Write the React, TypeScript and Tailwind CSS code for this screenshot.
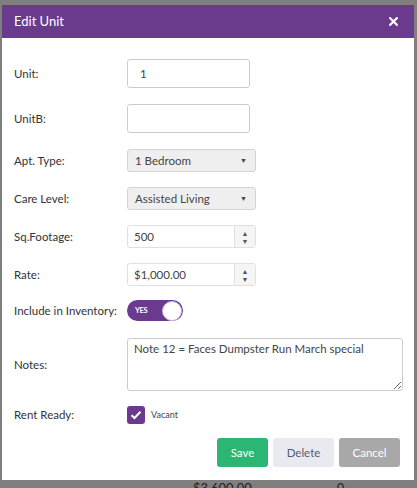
import React from 'react';

const FONT = { fontFamily: 'Lato, "Open Sans", Arial, sans-serif' };

function Label({ children }: { children: React.ReactNode }) {
  return <div className="w-[113px] shrink-0 text-[11.5px] text-[#333]">{children}</div>;
}

function SelectBox({ value }: { value: string }) {
  return (
    <div className="w-[129px] h-[23px] flex items-center justify-between px-[7px] rounded-[3px] border border-[#d4d4d4] bg-[#efefef] text-[11.5px] text-[#444]">
      <span>{value}</span>
      <span className="text-[7px] text-[#444] mr-[1px]">▼</span>
    </div>
  );
}

function Spinner({ value }: { value: string }) {
  return (
    <div className="w-[129px] h-[23px] flex rounded-[3px] border border-[#e0e0e0] bg-white text-[11.5px] text-[#444]">
      <div className="flex-1 flex items-center px-[6px]">{value}</div>
      <div className="w-[21px] flex flex-col items-center justify-center border-l border-[#e0e0e0] bg-[#f5f5f5] text-[7px] leading-[8px] text-[#555]">
        <span>▲</span>
        <span>▼</span>
      </div>
    </div>
  );
}

export default function App() {
  return (
    <div className="h-[488px] w-[417px] overflow-hidden bg-[#7f7f7f] pt-[5px] pl-[2px] pr-[3px]" style={FONT}>
      <div className="h-[475px] bg-white flex flex-col">
        {/* Header */}
        <div className="h-[33px] shrink-0 bg-[#6a3a8d] flex items-center justify-between pl-[12px] pr-[16px]">
          <span className="text-[13px] text-white">Edit Unit</span>
          <svg width="9" height="9" viewBox="0 0 9 9">
            <path d="M1.2 1.2 L7.8 7.8 M7.8 1.2 L1.2 7.8" stroke="#fff" strokeWidth="2.2" strokeLinecap="square" />
          </svg>
        </div>

        <div className="flex flex-col pl-[12px] pr-[11px]">
          <div className="flex items-center mt-[21px]">
            <Label>Unit:</Label>
            <div className="w-[123px] h-[29px] flex items-center pl-[12px] rounded-[3px] border border-[#ccc] text-[11.5px] text-[#444]">1</div>
          </div>
          <div className="flex items-center mt-[16px]">
            <Label>UnitB:</Label>
            <div className="w-[123px] h-[29px] rounded-[3px] border border-[#ccc]" />
          </div>
          <div className="flex items-center mt-[16px]">
            <Label>Apt. Type:</Label>
            <SelectBox value="1 Bedroom" />
          </div>
          <div className="flex items-center mt-[15px]">
            <Label>Care Level:</Label>
            <SelectBox value="Assisted Living" />
          </div>
          <div className="flex items-center mt-[15px]">
            <Label>Sq.Footage:</Label>
            <Spinner value="500" />
          </div>
          <div className="flex items-center mt-[15px]">
            <Label>Rate:</Label>
            <Spinner value="$1,000.00" />
          </div>
          <div className="flex items-center mt-[14px]">
            <Label>Include in Inventory:</Label>
            <div className="w-[56px] h-[21px] rounded-full bg-[#6b3a8f] flex items-center justify-between pl-[8px] pr-[1px]">
              <span className="text-[7.5px] font-bold text-white tracking-[-0.3px]">YES</span>
              <div className="w-[20px] h-[20px] rounded-full bg-white border border-[#c9b8d8]" />
            </div>
          </div>
          <div className="flex items-center mt-[17px]">
            <Label>Notes:</Label>
            <textarea
              readOnly
              defaultValue="Note 12 = Faces Dumpster Run March special"
              className="flex-1 h-[53px] rounded-[3px] border border-[#ccc] px-[6px] py-[1px] text-[11.5px] text-[#444] outline-none resize-y"
              style={FONT}
            />
          </div>
          <div className="flex items-center mt-[15px]">
            <Label>Rent Ready:</Label>
            <div className="w-[18px] h-[18px] rounded-[3px] bg-[#6b3a8f] flex items-center justify-center">
              <svg width="12" height="10" viewBox="0 0 12 10">
                <path d="M1.5 5.2 L4.5 8 L10.5 1.8" stroke="#fff" strokeWidth="2" fill="none" />
              </svg>
            </div>
            <span className="ml-[6px] text-[9px] text-[#444]">Vacant</span>
          </div>
          <div className="flex justify-end gap-[5px] mt-[14px] pr-[3px]">
            <button className="w-[51px] h-[29px] rounded-[3px] bg-[#2bb673] text-white text-[11.5px]">Save</button>
            <button className="w-[61px] h-[29px] rounded-[3px] bg-[#e9eaef] text-[#555c6f] text-[11.5px]">Delete</button>
            <button className="w-[61px] h-[29px] rounded-[3px] bg-[#a8a8a8] text-white text-[11.5px]">Cancel</button>
          </div>
        </div>
      </div>
      <div className="flex text-[13px] text-[#222] leading-none mt-[2px]">
        <span className="ml-[191px]">$3,600.00</span>
        <span className="ml-[85px]">0</span>
      </div>
    </div>
  );
}
